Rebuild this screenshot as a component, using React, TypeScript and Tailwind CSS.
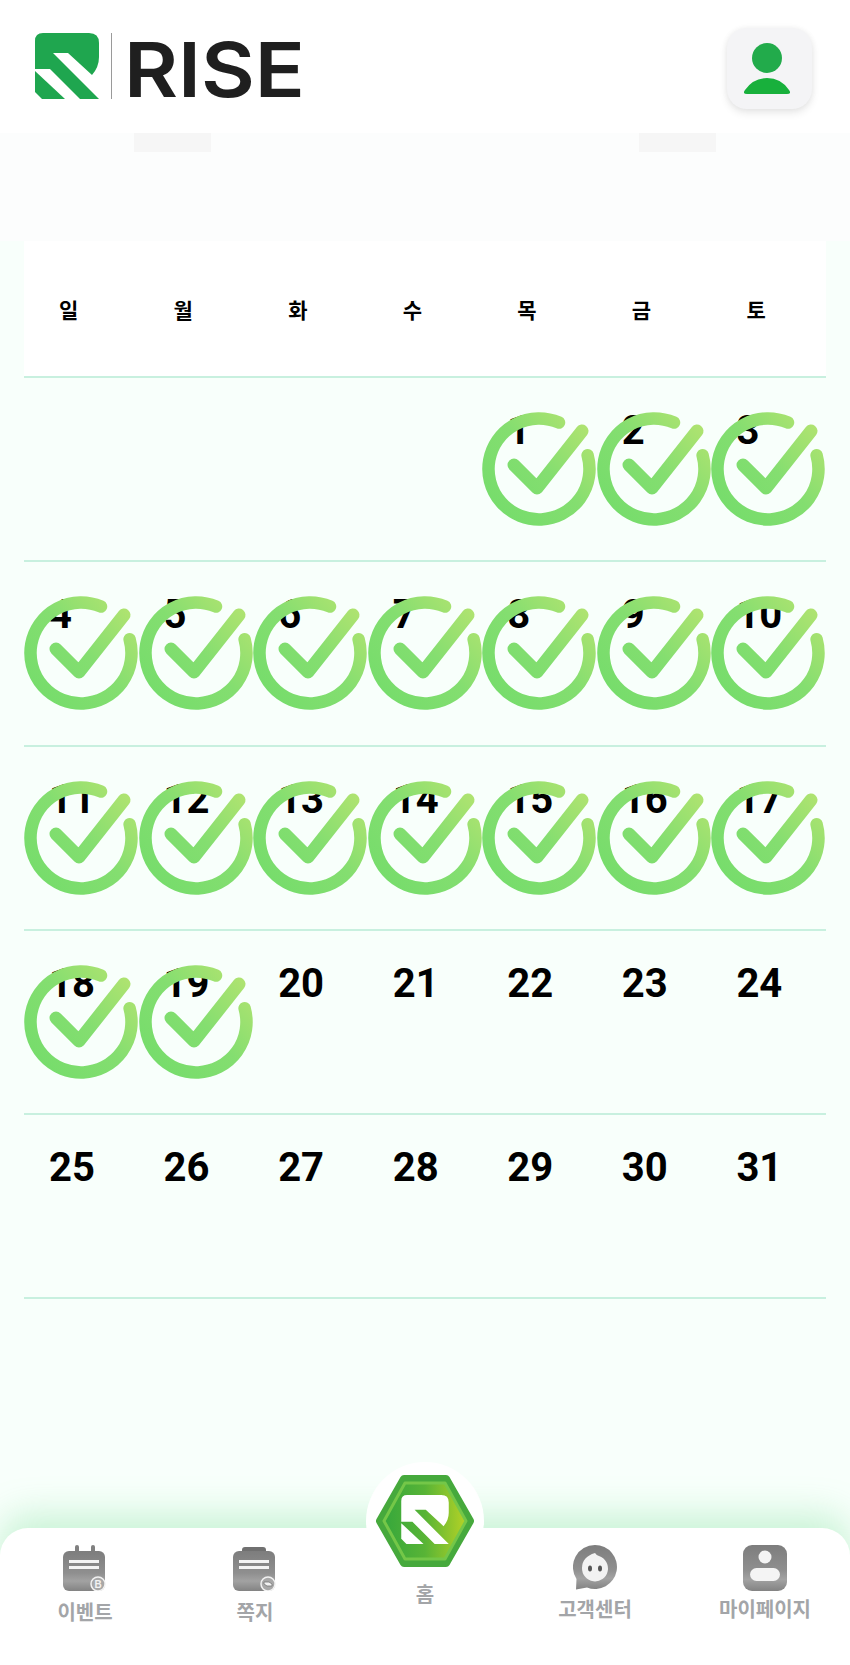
const ko = { fontFamily: '"Noto Sans CJK KR", "Liberation Sans", sans-serif' };
const days = ["일", "월", "화", "수", "목", "금", "토"];
const weeks: (number | null)[][] = [
  [null, null, null, null, 1, 2, 3],
  [4, 5, 6, 7, 8, 9, 10],
  [11, 12, 13, 14, 15, 16, 17],
  [18, 19, 20, 21, 22, 23, 24],
  [25, 26, 27, 28, 29, 30, 31],
];

function Mark({ w, h, fill }: { w: number; h: number; fill: string }) {
  return (
    <svg width={w} height={h} viewBox="0 0 64 66" className="shrink-0">
      <path fill={fill} d="M8 0H54Q64 0 64 10V24Q64 34 57 42L33 20H18L64 66H45L15 36H0V8Q0 0 8 0Z" />
      <path fill={fill} d="M0 38L30 66H7L0 59Z" />
    </svg>
  );
}

function Check() {
  return (
    <svg width="114" height="114" viewBox="0 0 114 114" className="absolute left-0 top-[34px]">
      <defs>
        <linearGradient id="chk" x1="0" y1="114" x2="114" y2="10" gradientUnits="userSpaceOnUse">
          <stop offset="0" stopColor="#72dc6a" />
          <stop offset="0.55" stopColor="#84de70" />
          <stop offset="1" stopColor="#b6e470" />
        </linearGradient>
      </defs>
      <path d="M77 10.600A50.500 50.500 0 1 0 105.600 43.300" fill="none" stroke="url(#chk)" strokeWidth="12.500" strokeLinecap="round" />
      <path d="M32 53L55 76L100 19" fill="none" stroke="url(#chk)" strokeWidth="13" strokeLinecap="round" strokeLinejoin="round" />
    </svg>
  );
}

function GrayDefs({ id }: { id: string }) {
  return (
    <defs>
      <linearGradient id={id} x1="0" y1="0" x2="0" y2="1">
        <stop offset="0" stopColor="#7d7d7d" />
        <stop offset="0.55" stopColor="#8f8f8f" />
        <stop offset="0.75" stopColor="#a2a2a2" />
        <stop offset="1" stopColor="#838383" />
      </linearGradient>
    </defs>
  );
}

function EventIcon() {
  return (
    <svg width="44" height="46" viewBox="0 0 44 46">
      <GrayDefs id="g1" />
      <rect x="12" y="0" width="4" height="12" rx="2" fill="#808080" />
      <rect x="28" y="0" width="4" height="12" rx="2" fill="#808080" />
      <rect x="0" y="6" width="42" height="40" rx="6" fill="url(#g1)" />
      <rect x="6" y="15" width="30" height="3" fill="#f4f4f4" />
      <rect x="6" y="21" width="30" height="3" fill="#f4f4f4" />
      <circle cx="35" cy="39" r="7" fill="#a8a8a8" stroke="#f2f2f2" strokeWidth="1.500" />
      <text x="35" y="43" textAnchor="middle" fontSize="10" fontWeight="700" fill="#f2f2f2" fontFamily="Liberation Sans, sans-serif">B</text>
    </svg>
  );
}

function NoteIcon() {
  return (
    <svg width="44" height="46" viewBox="0 0 44 46">
      <GrayDefs id="g2" />
      <rect x="9" y="2" width="24" height="8" rx="3" fill="#707070" />
      <rect x="0" y="6" width="42" height="40" rx="6" fill="url(#g2)" />
      <rect x="6" y="15" width="30" height="3" fill="#f4f4f4" />
      <rect x="6" y="21" width="30" height="3" fill="#f4f4f4" />
      <circle cx="35" cy="39" r="7" fill="#a8a8a8" stroke="#f2f2f2" strokeWidth="1.500" />
      <path d="M31 37h5l3 2v2h-5l-3-2z" fill="#f2f2f2" stroke="#777" strokeWidth="0.800" />
    </svg>
  );
}

function ChatIcon() {
  return (
    <svg width="44" height="46" viewBox="0 0 44 46">
      <GrayDefs id="g3" />
      <path d="M22 0A22 22 0 1 1 14 42.500L3 44.500L3.500 34A22 22 0 0 1 22 0Z" fill="url(#g3)" />
      <path d="M22 8Q24 11 26 11A13 13 0 1 1 9 23Q9 12 22 8Z" fill="#f2f2f2" />
      <ellipse cx="17" cy="23.500" rx="2" ry="3" fill="#555" />
      <ellipse cx="27" cy="23.500" rx="2" ry="3" fill="#555" />
    </svg>
  );
}

function MyIcon() {
  return (
    <svg width="44" height="46" viewBox="0 0 44 46">
      <GrayDefs id="g4" />
      <rect x="0" y="0" width="44" height="46" rx="9" fill="url(#g4)" />
      <circle cx="22" cy="12" r="6.500" fill="#f4f4f4" />
      <rect x="7" y="23" width="30" height="13" rx="6.500" fill="#f4f4f4" />
    </svg>
  );
}

function Item({ icon, label, top }: { icon: React.ReactNode; label: string; top: string }) {
  return (
    <div className="flex flex-col items-center">
      {icon}
      <span className={`${top} text-[20px] leading-[24px] font-bold text-[#a3a5a8] whitespace-nowrap`} style={ko}>{label}</span>
    </div>
  );
}

export default function App() {
  return (
    <div className="relative w-[850px] h-[1665px] overflow-hidden bg-[#f8fffb] flex flex-col" style={{ fontFamily: "Roboto, sans-serif" }}>
      <header className="h-[133px] shrink-0 bg-white flex items-start justify-between pl-[35px] pr-[38px]">
        <div className="flex items-start pt-[33px]">
          <Mark w={64} h={66} fill="#1fa64f" />
          <div className="w-px h-[66px] bg-[#9a9a9a] ml-[12px]" />
          <span className="ml-[12px] mt-[-2px] origin-left scale-x-[1.09] text-[#1f1f1f] text-[76px] leading-[76px] font-semibold whitespace-nowrap" style={{ fontFamily: "Inter, sans-serif" }}>RISE</span>
        </div>
        <div className="mt-[28px] w-[85px] h-[81px] rounded-[20px] bg-[#f4f4f6] shadow-[0_4px_8px_rgba(0,0,0,0.09),0_0_6px_rgba(0,0,0,0.05)] flex items-center justify-center pr-[5px]">
          <svg width="46" height="52" viewBox="0 0 46 52">
            <circle cx="23" cy="15" r="15" fill="#22ab4b" />
            <path d="M3 51Q-2 51 1 47Q9 35 23 35Q37 35 45 47Q48 51 43 51Z" fill="#18b03c" />
          </svg>
        </div>
      </header>

      <div className="h-[108px] shrink-0 bg-[#fcfdfd] flex items-start pl-[134px] gap-[428px]">
        <div className="w-[77px] h-[19px] bg-[#f6f6f6]" />
        <div className="w-[77px] h-[19px] bg-[#f6f6f6]" />
      </div>

      <main className="mx-[24px] shrink-0 flex flex-col">
        <div className="h-[137px] bg-white grid grid-cols-7 items-center border-b-2 border-[#c8f0df]">
          {days.map((d) => (
            <div key={d} className="pl-[35px] text-[21px] leading-[26px] font-bold text-black" style={ko}>{d}</div>
          ))}
        </div>
        {weeks.map((w, i) => (
          <div key={i} className="h-[184.25px] grid grid-cols-7 border-b-2 border-[#c8f0df]">
            {w.map((n, j) => (
              <div key={j} className="relative pl-[25px] pt-[29px] text-[40px] leading-[47px] font-bold text-black">
                {n}
                {n !== null && n < 20 && <Check />}
              </div>
            ))}
          </div>
        ))}
      </main>

      <div className="flex-1" />

      <nav className="relative h-[137px] shrink-0 bg-white rounded-t-[28px] shadow-[0_-14px_34px_rgba(190,240,205,0.8)] grid grid-cols-5 pt-[17px]">
        <Item icon={<EventIcon />} label="이벤트" top="mt-[9px]" />
        <Item icon={<NoteIcon />} label="쪽지" top="mt-[9px]" />
        <div />
        <Item icon={<ChatIcon />} label="고객센터" top="mt-[6px]" />
        <Item icon={<MyIcon />} label="마이페이지" top="mt-[6px]" />
      </nav>

      <div className="absolute left-[366px] top-[1462px] w-[118px] h-[118px] rounded-full bg-white flex items-center justify-center">
        <svg width="100" height="94" viewBox="0 0 100 94">
          <defs>
            <linearGradient id="hexb" x1="0" y1="0" x2="1" y2="0">
              <stop offset="0" stopColor="#36a73c" />
              <stop offset="0.5" stopColor="#58b436" />
              <stop offset="1" stopColor="#b4d226" />
            </linearGradient>
          </defs>
          <path d="M29 5H71L95 47L71 89H29L5 47Z" fill="#46a93c" stroke="#46a93c" strokeWidth="8" strokeLinejoin="round" />
          <path d="M30 9H70L91 47L70 85H30L9 47Z" fill="url(#hexb)" stroke="#74c748" strokeWidth="3" strokeLinejoin="round" />
        </svg>
      </div>
      <div className="absolute left-[401px] top-[1495px]">
        <Mark w={48} h={49} fill="#ffffff" />
      </div>
      <div className="absolute left-[366px] top-[1582px] w-[118px] text-center text-[20px] leading-[24px] font-bold text-[#a3a5a8]" style={ko}>홈</div>
    </div>
  );
}
